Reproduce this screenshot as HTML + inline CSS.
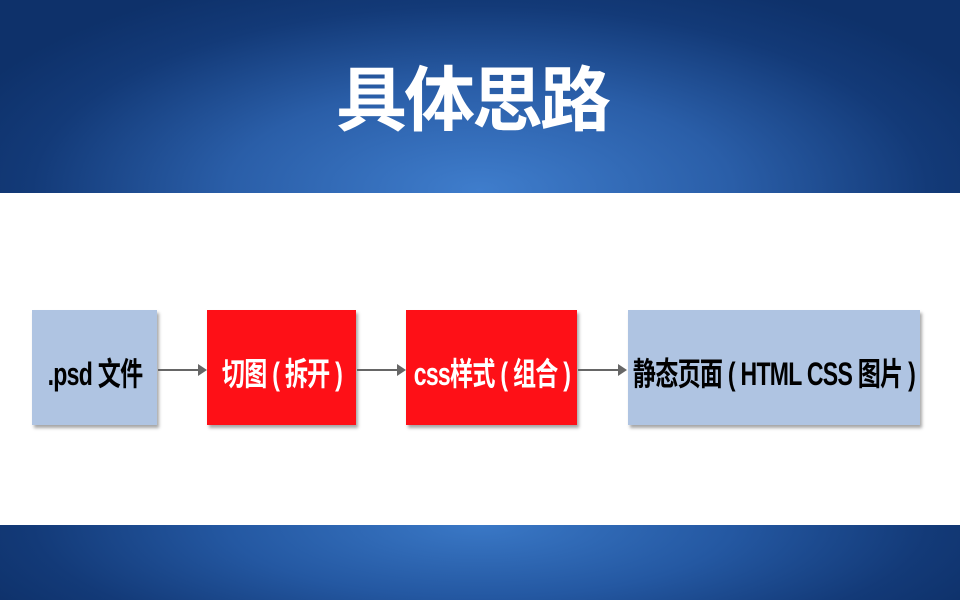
<!DOCTYPE html>
<html><head><meta charset="utf-8"><style>
*{margin:0;padding:0}
body{width:960px;height:600px;position:relative;overflow:hidden;background:#fff;font-family:"Liberation Sans","Noto Sans CJK SC",sans-serif}
.hd{position:absolute;left:0;top:0;width:960px;height:193px;background:radial-gradient(ellipse 560px 230px at 480px 190px,#3f7dcc 0%,#2a5ea8 45%,#133a78 80%,#0e316a 100%)}
.ft{position:absolute;left:0;top:525px;width:960px;height:75px;background:radial-gradient(ellipse 560px 160px at 480px 0px,#3a78c6 0%,#2458a2 45%,#133a78 80%,#0e316a 100%)}
.t{position:absolute;left:-8px;width:960px;top:52px;text-align:center;color:#fff;font-size:71px;font-weight:bold;line-height:86px;letter-spacing:-3px;font-family:"Noto Sans CJK SC",sans-serif}
.b{position:absolute;top:310px;height:115px;box-shadow:2px 3px 3px rgba(0,0,0,.35);font-weight:bold;font-size:32px;white-space:nowrap;overflow:visible}
.b span{position:absolute;top:62px;left:50%;transform:translate(-50%,-50%) scaleX(.72);letter-spacing:-1px}
.g{background:#afc4e2;color:#000}
.r{background:#fe1017;color:#fff}
.a{position:absolute;top:369px;height:2px;background:#666}
.h{position:absolute;top:364px;width:0;height:0;border-top:6px solid transparent;border-bottom:6px solid transparent;border-left:9px solid #666}
</style></head><body>
<div class="hd"></div><div class="t">具体思路</div>
<div class="b g" style="left:32px;width:125px"><span>.psd 文件</span></div>
<div class="a" style="left:158px;width:42px"></div><div class="h" style="left:198px"></div>
<div class="b r" style="left:207px;width:149px"><span>切图 ( 拆开 )</span></div>
<div class="a" style="left:357px;width:42px"></div><div class="h" style="left:397px"></div>
<div class="b r" style="left:406px;width:171px"><span>css样式 ( 组合 )</span></div>
<div class="a" style="left:578px;width:42px"></div><div class="h" style="left:618px"></div>
<div class="b g" style="left:628px;width:292px"><span>静态页面 ( HTML CSS 图片 )</span></div>
<div class="ft"></div>
</body></html>
